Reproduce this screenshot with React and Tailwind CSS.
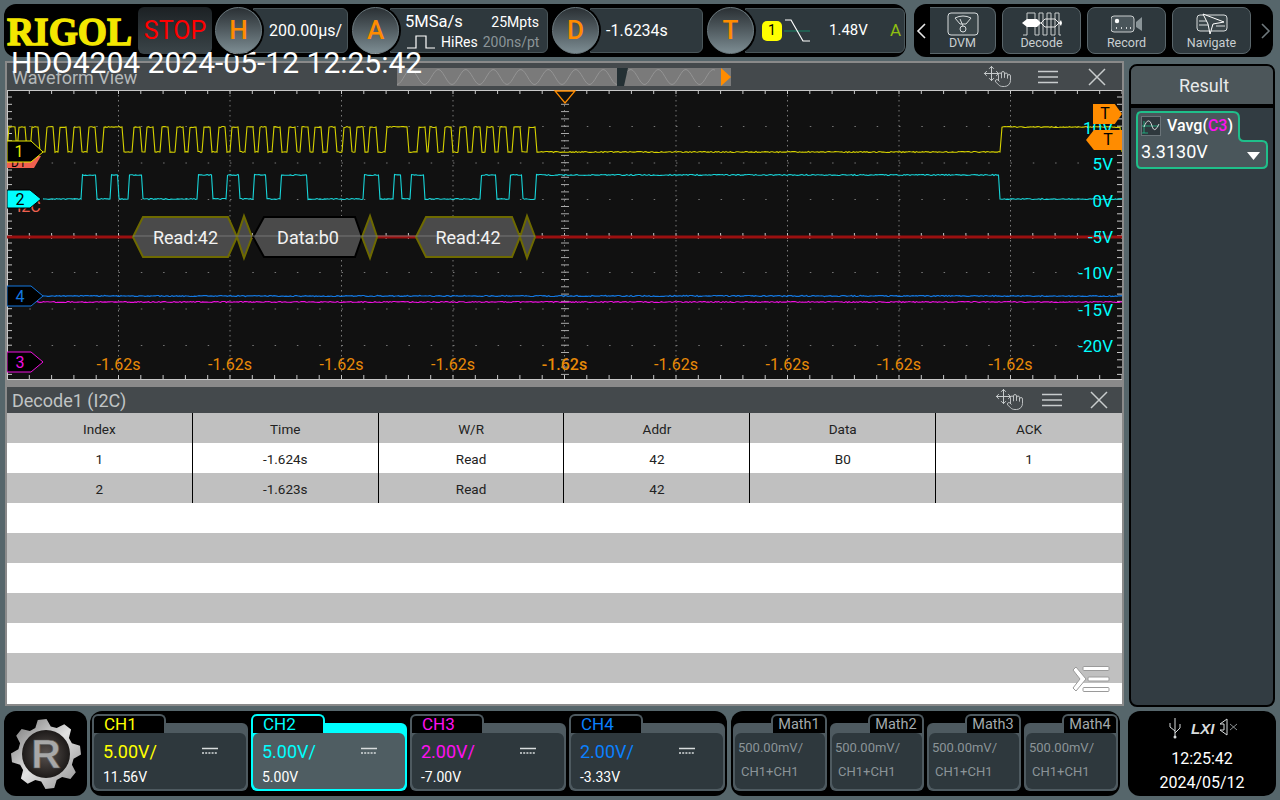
import { Hand, Move } from "lucide-react";

const yellowPeaks = [12, 22, 35, 50, 63, 77, 92, 137, 150, 165, 180, 193, 207, 222, 235, 250, 263, 277, 292, 305, 318, 332, 347, 360, 373, 422, 433, 448, 463, 477, 490, 503, 517, 532];
const cyanPulses = [[81, 97], [110, 119], [128, 143], [197, 213], [226, 240], [253, 267], [280, 308], [363, 380], [393, 402], [410, 425], [480, 497], [509, 523], [535, 1000]];
const gridX = [118.5, 230, 341.5, 453, 564.5, 676, 787.5, 899, 1010.5];
const gridY = [126.5, 163, 199.5, 236, 272.5, 309, 345.5];
const voltLabels = [["5V", 164], ["0V", 201], ["-5V", 237], ["-10V", 273], ["-15V", 310], ["-20V", 346]];

const jitter = (x) => {
  const s = Math.sin(x * 127.1) * 43758.5453;
  return (s - Math.floor(s) - 0.5) * 1.1;
};

// turns [start, end] high pulses into a slightly noisy trace
function tracePath(pulses, hi, lo, from, to, ramp = 1.5) {
  const pts = [];
  const flat = (a, b, y) => {
    for (let x = a; x < b; x += 1.5) pts.push(`${x.toFixed(1)},${(y + jitter(x)).toFixed(1)}`);
    pts.push(`${b.toFixed(1)},${y.toFixed(1)}`);
  };
  let x = from;
  pulses.forEach(([a, b]) => {
    flat(x, a, lo);
    flat(a + ramp, b - ramp, hi);
    x = b;
  });
  flat(x, to, lo);
  return pts.join(" ");
}

const yellowPulses = [];
yellowPeaks.forEach((c) => {
  if (c === 137) yellowPulses.push([102, 124]);
  if (c === 422) yellowPulses.push([385, 409]);
  yellowPulses.push([c - 5, c + 5]);
});
yellowPulses.push([1000, 1122]);

function range(from, to, step) {
  const out = [];
  for (let v = from; v <= to; v += step) out.push(v);
  return out;
}

function gearPoints(cx, cy, rIn, rOut, teeth) {
  const pts = [];
  for (let i = 0; i < teeth; i++) {
    const a = (i / teeth) * Math.PI * 2;
    const s = (Math.PI * 2) / teeth;
    [[-0.5, rIn], [-0.3, rOut], [0.02, rOut], [0.22, rIn]].forEach(([o, r]) => {
      pts.push(`${(cx + Math.cos(a + o * s) * r).toFixed(1)},${(cy + Math.sin(a + o * s) * r).toFixed(1)}`);
    });
  }
  return pts.join(" ");
}

function Knob({ letter }) {
  return (
    <div className="z-10 flex h-[47px] w-[47px] shrink-0 items-center justify-center rounded-full border border-[#6d7b80] bg-gradient-to-b from-[#2b3135] to-[#7d8d93] text-[26px] font-medium text-[#ff8c00] ring-[2px] ring-black">
      {letter}
    </div>
  );
}

function Panel({ className, children }) {
  return (
    <div className={`-ml-[9px] flex h-[45px] items-center rounded-r-md border border-[#4a565a] bg-[#2e383d] text-white ${className}`}>
      {children}
    </div>
  );
}

function ToolButton({ label, className, children }) {
  return (
    <div className={`flex h-[47px] flex-col items-center justify-between border border-[#5a666b] bg-[#2e383d] pt-[3px] pb-[3px] text-[12.5px] leading-[14px] text-[#c9cfd1] ${className}`}>
      <div className="flex h-[26px] items-center">{children}</div>
      {label}
    </div>
  );
}

function DcIcon() {
  return (
    <svg width="16" height="8" viewBox="0 0 16 8" className="shrink-0">
      <line x1="0" y1="1.5" x2="16" y2="1.5" stroke="#d8dcdd" strokeWidth="1.5" />
      <line x1="0" y1="6" x2="16" y2="6" stroke="#d8dcdd" strokeWidth="1.5" strokeDasharray="2 1.2" />
    </svg>
  );
}

function ChannelCard({ name, scale, offset, color, selected }) {
  return (
    <div className={`mt-[12px] flex h-[68px] w-[156px] flex-col rounded-md ${selected ? "bg-[#00ffff]" : "bg-[#4e5a60]"}`}>
      <div className="flex h-[10px] shrink-0">
        <div className={`-mt-[9px] h-[19px] w-[74px] rounded-t-md border-x-2 border-t-2 bg-black pl-[10px] text-[17px] leading-[17px] ${selected ? "border-[#00ffff]" : "border-[#4e5a60]"} ${color}`}>
          {name}
        </div>
      </div>
      <div className={`m-[2px] mt-0 flex flex-1 flex-col rounded-md pl-[9px] ${selected ? "bg-[#4f5d62]" : "bg-[#2e383d]"}`}>
        <div className="mt-[6px] flex h-[24px] items-center">
          <span className={`w-[99px] text-[18px] ${color}`}>{scale}</span>
          <DcIcon />
        </div>
        <span className="mt-[4px] text-[14px] leading-[20px] text-white">{offset}</span>
      </div>
    </div>
  );
}

function MathCard({ name }) {
  return (
    <div className="mt-[12px] flex h-[68px] w-[94px] flex-col rounded-md bg-[#4e5a60]">
      <div className="flex h-[10px] shrink-0 justify-end">
        <div className="-mt-[9px] h-[19px] w-[56px] rounded-t-md border-x-2 border-t-2 border-[#4e5a60] bg-black text-center text-[14.5px] leading-[17px] text-[#a3aaad]">
          {name}
        </div>
      </div>
      <div className="m-[2px] mt-0 flex flex-1 flex-col rounded-md bg-[#2e383d] pl-[3px] text-[13px] text-[#8b9498]">
        <span className="mt-[5px] leading-[20px]">500.00mV/</span>
        <span className="mt-[4px] pl-[3px] leading-[20px]">CH1+CH1</span>
      </div>
    </div>
  );
}

function WindowActions({ menuGap, closeGap }) {
  return (
    <div className="flex items-center text-[#c8cccd]">
      <div className="relative h-[24px] w-[30px]">
        <Move size={17} strokeWidth={1.4} className="absolute left-0 top-0" />
        <Hand size={18} strokeWidth={1.2} className="absolute left-[11px] top-[5px]" />
      </div>
      <svg width="20" height="14" viewBox="0 0 20 14" className={menuGap}>
        <path d="M0 1.5H20M0 7H20M0 12.5H20" stroke="currentColor" strokeWidth="1.5" />
      </svg>
      <svg width="18" height="18" viewBox="0 0 18 18" className={closeGap}>
        <path d="M1 1L17 17M17 1L1 17" stroke="currentColor" strokeWidth="1.5" />
      </svg>
    </div>
  );
}

function Navigator() {
  return (
    <div className="relative h-[18px] w-[334px] bg-[#7a7a7a]">
      <svg width="334" height="18" viewBox="0 0 334 18" className="absolute inset-0">
        <path
          d={`M0 17 ${range(0, 318, 2).map((x) => `L${x} ${(9 + Math.cos((x / 27.5) * Math.PI * 2) * 7.5).toFixed(1)}`).join(" ")}`}
          fill="none"
          stroke="#949494"
          strokeWidth="1"
        />
        <polygon points="220,0 231,0 227,18 220,18" fill="#243034" />
        <polygon points="324,0 334,9 324,18" fill="#ff8c00" />
      </svg>
    </div>
  );
}

function Scope() {
  return (
    <svg width="1115" height="290" viewBox="7 90 1115 290" className="absolute inset-0">
      {/* grid dots */}
      {gridX.map((x) => (
        <line key={x} x1={x} y1="90" x2={x} y2="380" stroke="#7a7a7a" strokeDasharray="1.5 3.5" />
      ))}
      {gridY.map((y) => (
        <line key={y} x1="7" y1={y} x2="1122" y2={y} stroke="#777" strokeDasharray="1.5 20.8" />
      ))}
      {/* edge and centre ticks */}
      {range(7, 1122, 22.3).map((x) => (
        <g key={x} stroke="#c8c8c8">
          <line x1={x} y1="90" x2={x} y2={94} />
          <line x1={x} y1="375" x2={x} y2="380" />
          <line x1={x} y1="233" x2={x} y2="239" />
        </g>
      ))}
      {range(97, 376, 7.3).map((y) => (
        <g key={y} stroke="#c8c8c8">
          <line x1="7" y1={y} x2="12" y2={y} />
          <line x1="1117" y1={y} x2="1122" y2={y} />
          <line x1="561" y1={y} x2="569" y2={y} stroke="#aaa" />
        </g>
      ))}
      <line x1="7" y1="90.5" x2="1122" y2="90.5" stroke="#c8c8c8" />
      <line x1="7" y1="379.5" x2="1122" y2="379.5" stroke="#c8c8c8" />
      <line x1="7.5" y1="90" x2="7.5" y2="380" stroke="#c8c8c8" />

      {/* traces */}
      <line x1="7" y1="237" x2="1122" y2="237" stroke="#9a1010" strokeWidth="3" />
      <polyline points={tracePath(yellowPulses, 127, 152, 7, 1122, 2)} fill="none" stroke="#d6d200" strokeWidth="1.1" />
      <polyline points={tracePath(cyanPulses, 175, 199, 43, 1122)} fill="none" stroke="#18d4d8" strokeWidth="1.1" />
      <polyline points={tracePath([], 0, 296, 43, 1122)} fill="none" stroke="#1478e0" strokeWidth="1.2" />
      <polyline points={tracePath([], 0, 302, 36, 1122)} fill="none" stroke="#f010e0" strokeWidth="1.1" />

      {/* decode bubbles */}
      <g fill="#4a4a4a" stroke="#6e6a00" strokeWidth="2">
        <polygon points="133,237 143,217 228,217 237,237 228,257 143,257" />
        <polygon points="237,237 244,216 252,237 244,258" />
        <polygon points="253,237 264,217 355,217 362,237 355,257 264,257" stroke="#000" />
        <polygon points="362,237 370,216 377,237 370,258" />
        <polygon points="416,237 426,217 512,217 520,237 512,257 426,257" />
        <polygon points="520,237 527,216 535,237 527,258" />
      </g>
      <line x1="133" y1="236" x2="535" y2="236" stroke="#8a8a8a" strokeOpacity="0.7" />
      <g fill="#f2f2f2" fontSize="18" textAnchor="middle">
        <text x="185.5" y="244">Read:42</text>
        <text x="308" y="244">Data:b0</text>
        <text x="468" y="244">Read:42</text>
      </g>

      {/* channel markers */}
      <polygon points="7,156 41,156 34,168 7,168" fill="#f0604f" />
      <text x="11" y="167" fontSize="12" fill="#000">D1</text>
      <text x="17" y="212" fontSize="16" fill="#f0604f">I2C</text>
      <polygon points="7,141 31,141 43,152 31,162 7,162" fill="#000" stroke="#e8e800" />
      <text x="19" y="157" fontSize="16" fill="#e8e800" textAnchor="middle">1</text>
      <polygon points="7,190 30,190 41,199 30,208 7,208" fill="#00ffff" stroke="#000" />
      <text x="20" y="205" fontSize="16" fill="#000" textAnchor="middle">2</text>
      <polygon points="7,286 31,286 43,296 31,306 7,306" fill="#000" stroke="#1478e0" />
      <text x="20" y="302" fontSize="16" fill="#1478e0" textAnchor="middle">4</text>
      <polygon points="7,352 31,352 43,362 31,372 7,372" fill="#000" stroke="#f010e0" />
      <text x="20" y="368" fontSize="16" fill="#f010e0" textAnchor="middle">3</text>

      {/* centre marker */}
      <polygon points="555,91 575,91 565,103" fill="#111" stroke="#ff8c00" strokeWidth="1.3" />
    </svg>
  );
}

const decodeHead = ["Index", "Time", "W/R", "Addr", "Data", "ACK"];
const decodeRows = [
  ["1", "-1.624s", "Read", "42", "B0", "1"],
  ["2", "-1.623s", "Read", "42", "", ""],
  [], [], [], [], [], [],
];

function DecodeTable() {
  return (
    <div className="relative flex flex-1 flex-col overflow-hidden bg-white text-[13.5px] text-[#222]">
      <div className="grid h-[30px] shrink-0 grid-cols-6 items-stretch bg-[#c0c0c0]">
        {decodeHead.map((h, i) => (
          <div key={h} className={`flex items-center justify-center pt-[2px] ${i < 5 ? "border-r border-black" : ""}`}>
            {h}
          </div>
        ))}
      </div>
      {decodeRows.map((row, r) => (
        <div key={r} className={`grid h-[30px] shrink-0 grid-cols-6 ${r % 2 ? "bg-[#c0c0c0]" : "bg-white"}`}>
          {row.map((cell, i) => (
            <div key={i} className={`flex items-center justify-center pt-[2px] ${i < 5 ? "border-r border-black" : ""}`}>
              {cell}
            </div>
          ))}
        </div>
      ))}
      <svg width="38" height="28" viewBox="0 0 38 28" className="absolute bottom-[11px] right-[12px]">
        <g fill="#fff" stroke="#9a9a9a">
          <rect x="11" y="1.5" width="26" height="4" rx="1" />
          <rect x="16" y="12" width="21" height="4" rx="1" />
          <rect x="11" y="22.5" width="26" height="4" rx="1" />
          <path d="M1 5L4 2L14 14L4 26L1 23L8 14Z" />
        </g>
      </svg>
    </div>
  );
}

export default function App() {
  return (
    <div className="relative flex h-[800px] w-[1280px] flex-col overflow-hidden bg-[#56666b] font-[family-name:Roboto,sans-serif]">
      {/* top bar */}
      <div className="mt-[4px] flex h-[53px] shrink-0 pl-[4px]">
        <div className="flex h-[53px] w-[902px] items-center rounded-xl bg-black pl-[3px]">
          <svg width="127" height="36" viewBox="0 0 127 36" className="shrink-0 overflow-visible">
            <text x="0" y="32" fontFamily="Liberation Serif" fontWeight="700" fontSize="40" textLength="125" lengthAdjust="spacingAndGlyphs" fill="#f3e600" stroke="#f3e600" strokeWidth="1.4">
              RIGOL
            </text>
          </svg>
          <div className="ml-[4px] flex h-[47px] w-[74px] shrink-0 items-center justify-center rounded-md bg-gradient-to-b from-[#1c2124] to-[#3b4549] text-[25px] text-[#ff0000]">
            STOP
          </div>
          <div className="ml-[3px] flex items-center">
            <Knob letter="H" />
            <Panel className="w-[95px] pl-[15px] text-[16px]">200.00µs/</Panel>
          </div>
          <div className="ml-[4px] flex items-center">
            <Knob letter="A" />
            <Panel className="w-[158px] pl-[14px] text-[14px]">
              <div className="flex w-[144px] flex-col">
                <div className="flex justify-between pr-[8px] text-[16.5px] leading-[22px]">
                  <span>5MSa/s</span>
                  <span className="text-[14px]">25Mpts</span>
                </div>
                <div className="flex items-center text-[14px] leading-[18px]">
                  <svg width="28" height="14" viewBox="0 0 28 14" className="ml-[2px]">
                    <path d="M0 13H9V1H19V13H28" fill="none" stroke="#fff" strokeWidth="1.2" />
                  </svg>
                  <span className="ml-[6px]">HiRes</span>
                  <span className="ml-[5px] text-[#8b9498]">200ns/pt</span>
                </div>
              </div>
            </Panel>
          </div>
          <div className="ml-[4px] flex items-center">
            <Knob letter="D" />
            <Panel className="w-[113px] pl-[15px] text-[16px]">-1.6234s</Panel>
          </div>
          <div className="ml-[4px] flex items-center">
            <Knob letter="T" />
            <Panel className="w-[160px] pl-[16px] text-[15px]">
              <span className="flex h-[20px] w-[20px] shrink-0 items-center justify-center rounded-[5px] bg-[#ffff00] text-[14px] text-black">1</span>
              <svg width="28" height="28" viewBox="0 0 28 28" className="ml-[2px] shrink-0">
                <path d="M0 14H26" stroke="#1f6b58" strokeWidth="1.5" />
                <path d="M1 3H7L19 24H26" fill="none" stroke="#fff" strokeWidth="1.2" />
              </svg>
              <span className="ml-[17px] w-[61px]">1.48V</span>
              <span className="text-[17px] text-[#8fbf10]">A</span>
            </Panel>
          </div>
        </div>

        <div className="ml-[8px] flex h-[53px] w-[359px] items-center rounded-xl bg-black">
          <svg width="16" height="18" viewBox="0 0 16 18" className="shrink-0">
            <path d="M11 2L4 9L11 16" fill="none" stroke="#e8e8e8" strokeWidth="1.6" />
          </svg>
          <ToolButton label="DVM" className="w-[66px] rounded-r-lg border-l-0">
            <svg width="32" height="24" viewBox="0 0 32 24">
              <rect x="1" y="1" width="30" height="22" rx="3" fill="#3a4549" stroke="#d8dcdd" />
              <path d="M8 6Q16 2 24 6L19 12H13Z" fill="none" stroke="#d8dcdd" />
              <circle cx="16" cy="17" r="3" fill="none" stroke="#d8dcdd" />
              <path d="M16 14L13 7" stroke="#d8dcdd" />
            </svg>
          </ToolButton>
          <ToolButton label="Decode" className="ml-[6px] w-[79px] rounded-lg">
            <svg width="40" height="24" viewBox="0 0 40 24">
              <path d="M1 23H5V1H13V23H17V1H21V23H25V1H29V23H33V1H37V23H39" fill="none" stroke="#c8cccd" />
              <polygon points="0,11 5,7 15,7 19,11 15,15 5,15" fill="#fff" />
              <path d="M19 11L23 7H33L37 11L33 15H23Z" fill="none" stroke="#e8e8e8" />
              <polygon points="37,11 39,8 40,11 39,14" fill="#fff" />
            </svg>
          </ToolButton>
          <ToolButton label="Record" className="ml-[6px] w-[79px] rounded-lg">
            <svg width="32" height="18" viewBox="0 0 32 18">
              <rect x="0" y="1" width="23" height="16" rx="3" fill="#4a555a" stroke="#c8cccd" />
              <circle cx="6" cy="6" r="2.2" fill="#fff" />
              <path d="M5 13H6M10 13H11M15 13H16M19 13H20" stroke="#fff" strokeWidth="1.6" />
              <polygon points="25,7 31,2 31,16 25,12" fill="#8a9498" />
            </svg>
          </ToolButton>
          <ToolButton label="Navigate" className="ml-[6px] w-[79px] rounded-lg">
            <svg width="32" height="22" viewBox="0 0 32 22">
              <rect x="1" y="2" width="30" height="16" rx="3" fill="#3a4549" stroke="#d8dcdd" />
              <path d="M3 8H12M3 12H12M20 13H29" stroke="#d8dcdd" />
              <path d="M7 1L28 9L17 11L14 21L12 11Z" fill="#3a4549" stroke="#fff" />
            </svg>
          </ToolButton>
          <svg width="16" height="18" viewBox="0 0 16 18" className="ml-[6px] shrink-0">
            <path d="M5 2L12 9L5 16" fill="none" stroke="#6e787c" strokeWidth="1.6" />
          </svg>
        </div>
      </div>

      {/* main area */}
      <div className="mt-[4px] flex h-[648px] shrink-0">
        <div className="ml-[5px] flex h-[645px] w-[1119px] flex-col border-x-[2px] border-t-[2px] border-b-[2px] border-[#8a8a8a] bg-[#8a8a8a]">
          <div className="flex h-[27px] shrink-0 items-center justify-between bg-[#44494c] pl-[5px] pr-[16px] text-[18px] text-[#b4b8b9]">
            <span className="pt-[1px]">Waveform View</span>
            <div className="absolute left-[397px] top-[68px]">
              <Navigator />
            </div>
            <WindowActions menuGap="ml-[25px]" closeGap="ml-[30px]" />
          </div>
          <div className="relative h-[290px] shrink-0 bg-[#111]">
            <Scope />
            <span className="absolute right-[9px] top-[29px] text-[17px] leading-[18px] text-[#00ffff]">10V</span>
            {voltLabels.map(([label, y]) => (
              <span key={label} className="absolute right-[9px] text-[17px] leading-[18px] text-[#00ffff]" style={{ top: y - 99 }}>
                {label}
              </span>
            ))}
            {gridX.map((x, i) => (
              <span
                key={x}
                className={`absolute top-[266px] w-[60px] text-center text-[16px] leading-[18px] text-[#e88a08] ${i === 4 ? "font-medium" : ""}`}
                style={{ left: x - 7 - 30 }}
              >
                -1.62s
              </span>
            ))}
            {/* trigger flags sit on top of the 10V label */}
            <div className="absolute left-[1086px] top-[14px] flex h-[20px] w-[29px] items-center bg-[#ff8c00] pl-[2px] text-[16px] leading-none text-black [clip-path:polygon(0_0,75%_0,100%_50%,75%_100%,0_100%)]">
              <span className="w-[20px] text-center">T</span>
            </div>
            <div className="absolute left-[1079px] top-[40px] flex h-[20px] w-[36px] items-center justify-end bg-[#ff8c00] pr-[4px] text-[16px] leading-none text-black [clip-path:polygon(0_50%,22%_0,100%_0,100%_100%,22%_100%)]">
              <span className="w-[20px] text-center">T</span>
            </div>
          </div>
          <div className="h-[7px] shrink-0" />
          <div className="flex h-[26px] shrink-0 items-center justify-between bg-[#44494c] pl-[5px] pr-[14px] text-[18px] text-[#c0c4c5]">
            <span>Decode1 (I2C)</span>
            <WindowActions menuGap="ml-[17px]" closeGap="ml-[28px]" />
          </div>
          <DecodeTable />
        </div>

        {/* result column */}
        <div className="ml-[5px] mt-[3px] flex h-[643px] w-[146px] flex-col rounded-lg border-[2px] border-black bg-[#323c42]">
          <div className="box-content flex h-[37px] shrink-0 items-center justify-center rounded-t-md border-b-[4px] border-black bg-[#4c565a] pl-[4px] pt-[1px] text-[18px] text-[#e8eaea]">
            Result
          </div>
          <div className="relative ml-[5px] mt-[3px] h-[58px] w-[132px] text-white">
            <svg width="132" height="58" viewBox="0 0 132 58" className="absolute inset-0">
              <path d="M5 1H97Q103 1 103 7V25Q103 30 108 30H126Q131 30 131 35V52Q131 57 126 57H5Q1 57 1 52V6Q1 1 5 1Z" fill="#4a565b" stroke="#1fbf8a" strokeWidth="2" />
            </svg>
            <div className="relative flex items-center pl-[5px] pt-[5px]">
              <svg width="20" height="20" viewBox="0 0 20 20" className="shrink-0">
                <rect x="0.5" y="0.5" width="19" height="19" fill="#2e383d" stroke="#6a7479" />
                <path d="M3 5V17M1 17H7M1 10H18" stroke="#1fbf8a" strokeWidth="0.8" />
                <path d="M3 11C6 3 9 3 11 10C13 16 15 14 18 8" fill="none" stroke="#d8dcdd" />
              </svg>
              <span className="ml-[6px] text-[16px] font-medium leading-[20px]">
                Vavg(<span className="text-[#ff10f0]">C3</span>)
              </span>
            </div>
            <div className="relative mt-[4px] flex items-center justify-between pl-[5px] pr-[8px] text-[18px] leading-[24px]">
              <span>3.3130V</span>
              <svg width="13" height="8" viewBox="0 0 13 8" className="mt-[7px]">
                <polygon points="0,0 13,0 6.5,8" fill="#fff" />
              </svg>
            </div>
          </div>
        </div>
      </div>

      {/* bottom bar */}
      <div className="mt-[2px] flex h-[85px] shrink-0 pl-[4px]">
        <div className="flex h-[85px] w-[83px] items-center justify-center rounded-xl bg-black">
          <svg width="72" height="72" viewBox="0 0 72 72">
            <defs>
              <linearGradient id="gearSilver" x1="0" y1="0" x2="1" y2="1">
                <stop offset="0" stopColor="#6f6f6f" />
                <stop offset="0.5" stopColor="#e2e2e2" />
                <stop offset="1" stopColor="#8a8a8a" />
              </linearGradient>
              <radialGradient id="gearCore">
                <stop offset="0" stopColor="#5a5350" />
                <stop offset="1" stopColor="#1d1a19" />
              </radialGradient>
            </defs>
            <polygon points={gearPoints(36, 36, 28, 35, 8)} fill="url(#gearSilver)" />
            <circle cx="36" cy="36" r="24" fill="url(#gearCore)" />
            <text x="36" y="50" textAnchor="middle" fontFamily="Liberation Sans" fontWeight="700" fontSize="41" fill="#a8a8a8" stroke="#555" strokeWidth="0.6">R</text>
          </svg>
        </div>
        <div className="ml-[3px] flex h-[85px] w-[637px] gap-[3px] rounded-xl bg-black pl-[2px]">
          <ChannelCard name="CH1" scale="5.00V/" offset="11.56V" color="text-[#ffff00]" />
          <ChannelCard name="CH2" scale="5.00V/" offset="5.00V" color="text-[#00ffff]" selected />
          <ChannelCard name="CH3" scale="2.00V/" offset="-7.00V" color="text-[#ff10f0]" />
          <ChannelCard name="CH4" scale="2.00V/" offset="-3.33V" color="text-[#0a80ff]" />
        </div>
        <div className="ml-[4px] flex h-[85px] w-[389px] gap-[3px] rounded-xl bg-black pl-[2px]">
          <MathCard name="Math1" />
          <MathCard name="Math2" />
          <MathCard name="Math3" />
          <MathCard name="Math4" />
        </div>
        <div className="ml-[8px] flex h-[85px] w-[148px] flex-col items-center rounded-xl bg-black text-[16px] text-white">
          <svg width="74" height="22" viewBox="0 0 74 22" className="ml-[4px] mt-[6px] shrink-0">
            <path d="M8 1V20M8 14L3 10V6M8 16L13 11V7" fill="none" stroke="#d8dcdd" />
            <circle cx="8" cy="20" r="1.5" fill="#d8dcdd" />
            <text x="24" y="17" fontSize="15" fontWeight="700" fontStyle="italic" fill="#d8dcdd" fontFamily="Liberation Sans">LXI</text>
            <path d="M57 7H53L60 2V18L53 13H57Z" fill="none" stroke="#d8dcdd" />
            <path d="M63 7L70 13M70 7L63 13" stroke="#aab0b2" strokeWidth="0.8" />
          </svg>
          <span className="mt-[8px] leading-[24px]">12:25:42</span>
          <span className="leading-[24px]">2024/05/12</span>
        </div>
      </div>

      <span className="absolute left-[11px] top-[45px] text-[30px] leading-[36px] text-white">HDO4204 2024-05-12 12:25:42</span>
    </div>
  );
}
